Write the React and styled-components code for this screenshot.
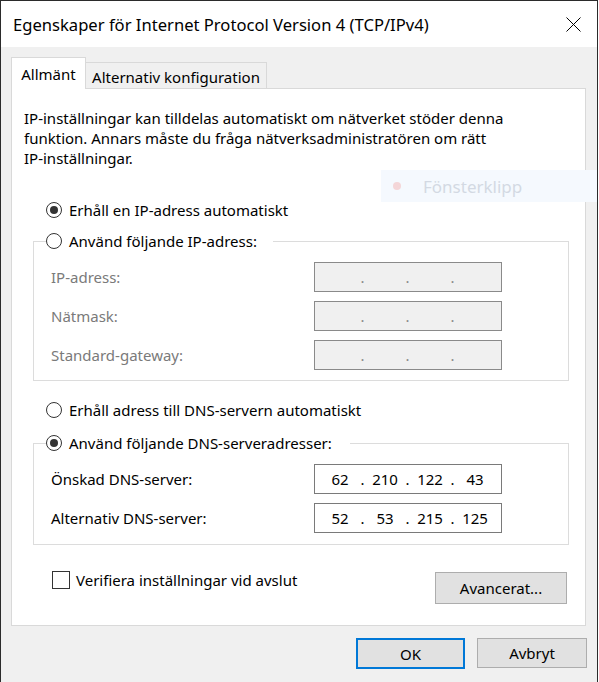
import React from 'react';
import styled, { createGlobalStyle } from 'styled-components';

const GlobalStyle = createGlobalStyle`
  html, body {
    margin: 0;
    padding: 0;
    background: #ffffff;
  }
  body {
    font-family: "Noto Sans", "Liberation Sans", sans-serif;
    font-size: 15px;
    color: #000;
  }
  * {
    box-sizing: border-box;
  }
`;

const Window = styled.div`
  position: relative;
  width: 598px;
  height: 682px;
  overflow: hidden;
  background: #f0f0f0;
  border: 1px solid #2b2b2b;
  border-bottom: none;
`;

const TitleBar = styled.div`
  height: 46px;
  background: #ffffff;
  display: flex;
  align-items: center;
  justify-content: space-between;
  padding: 0 16px 0 12px;
`;

const Title = styled.div`
  font-size: 16.6px;
  line-height: 20px;
  padding-top: 1px;
`;

const Body = styled.div`
  padding: 10px 11px 0 10px;
`;

const TabStrip = styled.div`
  display: flex;
  align-items: flex-end;
  height: 32px;
  margin-bottom: -1px;
  position: relative;
  z-index: 1;
`;

const Tab = styled.div`
  height: ${({ $active }) => ($active ? '32px' : '27px')};
  width: ${({ $width }) => $width}px;
  display: flex;
  align-items: center;
  justify-content: center;
  padding-top: ${({ $active }) => ($active ? '0' : '2px')};
  background: ${({ $active }) => ($active ? '#ffffff' : '#f0f0f0')};
  border: 1px solid #d9d9d9;
  border-bottom: ${({ $active }) => ($active ? 'none' : '1px solid #d9d9d9')};
  border-left: ${({ $first }) => ($first ? '1px solid #d9d9d9' : 'none')};
  white-space: nowrap;
`;

const Panel = styled.div`
  height: 538px;
  background: #ffffff;
  border: 1px solid #d9d9d9;
  padding: 19px 12px 0 12px;
  display: flex;
  flex-direction: column;
`;

const Intro = styled.p`
  margin: 0;
  line-height: 20px;
  width: 520px;
`;

const Option = styled.label`
  display: flex;
  align-items: center;
  height: 20px;
  line-height: 20px;
  margin-top: ${({ $top }) => $top}px;
  margin-left: ${({ $inset }) => $inset}px;
  white-space: nowrap;
`;

const Radio = styled.span`
  width: 16px;
  height: 16px;
  border-radius: 50%;
  border: 1px solid #333333;
  background: #ffffff;
  margin-right: 7px;
  display: flex;
  align-items: center;
  justify-content: center;
  flex-shrink: 0;
  &::after {
    content: '';
    width: 8px;
    height: 8px;
    border-radius: 50%;
    background: #333333;
    display: ${({ $checked }) => ($checked ? 'block' : 'none')};
  }
`;

const Check = styled.span`
  width: 18px;
  height: 18px;
  border: 1px solid #333333;
  background: #ffffff;
  margin-right: 6px;
  flex-shrink: 0;
`;

const Group = styled.fieldset`
  margin: ${({ $top }) => $top}px 4px 0 9px;
  padding: 11px 0 ${({ $bottom }) => $bottom}px 0;
  border: 1px solid #dcdcdc;
  min-width: 0;
`;

const Legend = styled.legend`
  margin-left: 12px;
  padding: 0 ${({ $gap }) => $gap}px 0 0;
`;

const FieldRow = styled.div`
  display: flex;
  align-items: center;
  height: 30px;
  padding-left: 17px;
  margin-top: ${({ $first }) => ($first ? 0 : 9)}px;
`;

const FieldLabel = styled.span`
  flex: 1;
  color: ${({ $disabled }) => ($disabled ? '#7a7a7a' : '#000000')};
`;

const IpBox = styled.div`
  width: 188px;
  height: 30px;
  margin-right: 66px;
  border: 1px solid ${({ $disabled }) => ($disabled ? '#8a8a8a' : '#7a7a7a')};
  background: ${({ $disabled }) => ($disabled ? '#f0f0f0' : '#ffffff')};
  display: flex;
  align-items: center;
  padding-left: 5px;
  color: ${({ $disabled }) => ($disabled ? '#8a8a8a' : '#000000')};
`;

const Octet = styled.span`
  width: 40px;
  text-align: center;
`;

const Dot = styled.span`
  width: 5px;
  text-align: center;
`;

const BottomRow = styled.div`
  display: flex;
  justify-content: space-between;
  align-items: flex-start;
  margin: 25px 6px 0 0;
`;

const Button = styled.div`
  width: ${({ $width }) => $width}px;
  height: ${({ $height }) => $height}px;
  margin-top: ${({ $top }) => $top || 0}px;
  display: flex;
  align-items: center;
  justify-content: center;
  background: #e1e1e1;
  border: ${({ $primary }) => ($primary ? '2px solid #0078d7' : '1px solid #adadad')};
`;

const Footer = styled.div`
  display: flex;
  justify-content: flex-end;
  gap: 12px;
  margin-top: 12px;
  margin-right: -1px;
`;

const Snip = styled.div`
  position: absolute;
  left: 380px;
  top: 169px;
  width: 230px;
  height: 32px;
  background: #f5f9fe;
  display: flex;
  align-items: center;
  padding-left: 12px;
  color: #d3d9e3;
  font-size: 17px;
`;

const SnipDot = styled.span`
  width: 8px;
  height: 8px;
  border-radius: 50%;
  background: #f4d6d8;
  margin-right: 22px;
`;

function IpAddress({ parts, disabled }) {
  const values = parts || ['', '', '', ''];
  return (
    <IpBox $disabled={disabled}>
      {values.map((v, i) => (
        <React.Fragment key={i}>
          {i > 0 && <Dot>.</Dot>}
          <Octet>{v}</Octet>
        </React.Fragment>
      ))}
    </IpBox>
  );
}

export default function App() {
  return (
    <>
      <GlobalStyle />
      <Window>
        <TitleBar>
          <Title>Egenskaper för Internet Protocol Version 4 (TCP/IPv4)</Title>
          <svg width="15" height="15" viewBox="0 0 15 15">
            <path d="M0.5 0.5 L14.5 14.5 M14.5 0.5 L0.5 14.5" stroke="#000" strokeWidth="1" fill="none" />
          </svg>
        </TitleBar>
        <Body>
          <TabStrip>
            <Tab $active $first $width={75}>Allmänt</Tab>
            <Tab $width={181}>Alternativ konfiguration</Tab>
          </TabStrip>
          <Panel>
            <Intro>
              IP-inställningar kan tilldelas automatiskt om nätverket stöder denna<br />
              funktion. Annars måste du fråga nätverksadministratören om rätt<br />
              IP-inställningar.
            </Intro>
            <Option $top={32} $inset={22}>
              <Radio $checked />Erhåll en IP-adress automatiskt
            </Option>
            <Group $top={11} $bottom={10}>
              <Legend $gap={16}>
                <Option $top={0} $inset={0}><Radio />Använd följande IP-adress:</Option>
              </Legend>
              <FieldRow $first>
                <FieldLabel $disabled>IP-adress:</FieldLabel>
                <IpAddress disabled />
              </FieldRow>
              <FieldRow>
                <FieldLabel $disabled>Nätmask:</FieldLabel>
                <IpAddress disabled />
              </FieldRow>
              <FieldRow>
                <FieldLabel $disabled>Standard-gateway:</FieldLabel>
                <IpAddress disabled />
              </FieldRow>
            </Group>
            <Option $top={19} $inset={22}>
              <Radio />Erhåll adress till DNS-servern automatiskt
            </Option>
            <Group $top={13} $bottom={11}>
              <Legend $gap={18}>
                <Option $top={0} $inset={0}><Radio $checked />Använd följande DNS-serveradresser:</Option>
              </Legend>
              <FieldRow $first>
                <FieldLabel>Önskad DNS-server:</FieldLabel>
                <IpAddress parts={['62', '210', '122', '43']} />
              </FieldRow>
              <FieldRow>
                <FieldLabel>Alternativ DNS-server:</FieldLabel>
                <IpAddress parts={['52', '53', '215', '125']} />
              </FieldRow>
            </Group>
            <BottomRow>
              <Option $top={0} $inset={28}>
                <Check />Verifiera inställningar vid avslut
              </Option>
              <Button $width={132} $height={32} $top={2}>Avancerat...</Button>
            </BottomRow>
          </Panel>
          <Footer>
            <Button $primary $width={109} $height={31}>OK</Button>
            <Button $width={110} $height={30}>Avbryt</Button>
          </Footer>
        </Body>
        <Snip>
          <SnipDot />Fönsterklipp
        </Snip>
      </Window>
    </>
  );
}
